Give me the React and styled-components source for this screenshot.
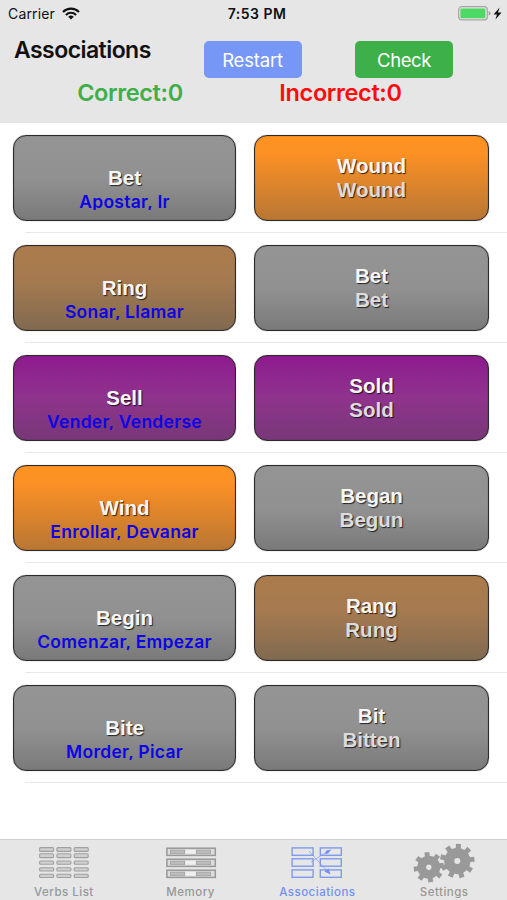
import React, { useState } from "react";
import styled, { createGlobalStyle } from "styled-components";

const GlobalStyle = createGlobalStyle`
  * {
    box-sizing: border-box;
  }
  body {
    margin: 0;
    background: #fff;
    font-family: Inter, "Liberation Sans", sans-serif;
  }
`;

const Screen = styled.div`
  display: flex;
  flex-direction: column;
  width: 507px;
  height: 900px;
  overflow: hidden;
  background: #fff;
`;

const Header = styled.header`
  height: 123px;
  flex: none;
  background: #e6e6e6;
`;

const StatusBar = styled.div`
  display: grid;
  grid-template-columns: 1fr auto 1fr;
  align-items: center;
  height: 27px;
  padding: 0 5px 0 8px;
  font-size: 14px;
  color: #111;
`;

const Carrier = styled.div`
  display: flex;
  align-items: center;
  gap: 7px;
  letter-spacing: 0.15px;
`;

const Time = styled.div`
  font-weight: 600;
  letter-spacing: 0.5px;
  padding-left: 4px;
`;

const Battery = styled.div`
  display: flex;
  justify-content: flex-end;
`;

const TitleRow = styled.div`
  display: flex;
  height: 51px;
  padding: 14px 54px 0 14px;
`;

const Title = styled.h1`
  width: 189.5px;
  margin: -6px 0 0;
  font-size: 23px;
  line-height: 30px;
  font-weight: 600;
  letter-spacing: -0.55px;
  color: #111;
`;

const Button = styled.button`
  width: 98px;
  height: 37px;
  padding: 0;
  border: 0;
  border-radius: 5px;
  font-family: inherit;
  font-size: 18.5px;
  letter-spacing: ${({ spacing }) => spacing};
  color: #fff;
  background: ${({ color }) => color};
  & + & {
    margin-left: 53.5px;
  }
`;

const ScoreRow = styled.div`
  display: grid;
  grid-template-columns: 260px 161px;
  line-height: 30px;
  text-align: center;
`;

const Score = styled.div`
  font-size: 23.5px;
  font-weight: 600;
  white-space: nowrap;
  letter-spacing: -0.35px;
  color: ${({ color }) => color};
`;

const List = styled.main`
  flex: 1;
`;

const Row = styled.div`
  display: grid;
  grid-template-columns: 223px 235px;
  column-gap: 18px;
  height: 110px;
  padding: 12px 0 0 13px;
  background: linear-gradient(#e8e8ea, #e8e8ea) 25px 100% / 100% 1px no-repeat;
`;

const fills = {
  gray: "#949494 0%, #919191 50%, #7a7a7a 100%",
  orange: "#ff9322 0%, #fb9025 22%, #b87634 100%",
  brown: "#ab7b4b 0%, #a67a50 40%, #816a50 100%",
  purple: "#8e1b8f 0%, #8f338d 50%, #773877 100%",
};

const Card = styled.div`
  display: flex;
  flex-direction: column;
  align-items: center;
  height: 86px;
  padding-top: ${({ verb }) => (verb ? "30px" : "18px")};
  border: 1px solid #2e2a2b;
  border-radius: 13px;
  box-shadow: 0 0 1px rgba(0, 0, 0, 0.5), inset 0 0 1px rgba(0, 0, 0, 0.6);
  background: linear-gradient(${({ fill }) => fills[fill]});
`;

const Word = styled.div`
  font-family: "Liberation Sans", Arial, sans-serif;
  font-size: 20.5px;
  line-height: 24px;
  font-weight: 700;
  color: ${({ dim }) => (dim ? "#dcdcdc" : "#f6f6f6")};
  text-shadow: 1px 1px 1px rgba(0, 0, 0, 0.75);
`;

const Translation = styled.div`
  height: 20px;
  overflow: hidden;
  font-size: 17.5px;
  line-height: 24px;
  font-weight: 600;
  letter-spacing: 0.27px;
  white-space: nowrap;
  color: #0d03e6;
`;

const TabBar = styled.nav`
  display: grid;
  grid-template-columns: repeat(4, 1fr);
  height: 61px;
  flex: none;
  background: #e6e6e6;
  border-top: 1px solid #cfcfcf;
`;

const Tab = styled.div`
  display: flex;
  flex-direction: column;
  align-items: center;
  padding: 3px 0 0 1px;
  font-size: 11.5px;
  line-height: 14px;
  font-weight: 500;
  letter-spacing: 0.5px;
  cursor: pointer;
  color: ${({ active }) => (active ? "#7390f2" : "#979797")};
  svg {
    display: block;
    margin-bottom: 2px;
  }
`;

const rows = [
  { verb: "Bet", es: "Apostar, Ir", left: "gray", past: "Wound", part: "Wound", right: "orange" },
  { verb: "Ring", es: "Sonar, Llamar", left: "brown", past: "Bet", part: "Bet", right: "gray" },
  { verb: "Sell", es: "Vender, Venderse", left: "purple", past: "Sold", part: "Sold", right: "purple" },
  { verb: "Wind", es: "Enrollar, Devanar", left: "orange", past: "Began", part: "Begun", right: "gray" },
  { verb: "Begin", es: "Comenzar, Empezar", left: "gray", past: "Rang", part: "Rung", right: "brown" },
  { verb: "Bite", es: "Morder, Picar", left: "gray", past: "Bit", part: "Bitten", right: "gray" },
];

const WifiIcon = () => (
  <svg width="18" height="13" viewBox="0 0 18 13" fill="none" stroke="#111" strokeWidth="2.1">
    <path d="M1 4.9a11.4 11.4 0 0 1 16 0" />
    <path d="M3.9 7.9a7.3 7.3 0 0 1 10.2 0" />
    <path d="M9 12.6 6.2 9.8a4 4 0 0 1 5.6 0Z" fill="#111" stroke="none" />
  </svg>
);

const BatteryIcon = () => (
  <svg width="44" height="15" viewBox="0 0 44 15">
    <rect x="0.7" y="0.7" width="28.6" height="13.2" rx="3" fill="none" stroke="#a5a5a5" strokeWidth="1.2" />
    <rect x="2.4" y="2.4" width="25" height="9.8" rx="1.2" fill="#4cd964" />
    <path d="M30.6 5q2 .6 2 2.3t-2 2.3Z" fill="#a5a5a5" />
    <path d="M41.6 1.4 35.6 8.4h3.4L37.4 13.4l6.2-7h-3.6Z" fill="#111" />
  </svg>
);

const VerbsIcon = () => (
  <svg width="52" height="40" viewBox="0 0 52 40" fill="#cfcfcf" stroke="#a0a0a0" strokeWidth="1.1">
    {[4.6, 10.8, 18, 24.8, 31.3].map((y) =>
      [1.6, 18.9, 36.2].map((x) => (
        <rect key={`${x}-${y}`} x={x} y={y} width="14" height={y < 15 ? 3.8 : 3.2} rx="1" />
      ))
    )}
  </svg>
);

const MemoryIcon = () => (
  <svg width="52" height="40" viewBox="0 0 52 40" stroke="#999">
    {[5.2, 16.2, 27.2].map((y) => (
      <g key={y}>
        <rect x="1.9" y={y} width="48.4" height="7.2" fill="#dcdcdc" strokeWidth="1.5" />
        <rect x="5.5" y={y + 2} width="14" height="3.2" fill="#bdbdbd" stroke="#a8a8a8" strokeWidth="1" />
        <rect x="31.5" y={y + 2} width="14" height="3.2" fill="#bdbdbd" stroke="#a8a8a8" strokeWidth="1" />
        <rect x="20.5" y={y + 1.8} width="10" height="3.6" fill="#f0f0f0" stroke="none" />
      </g>
    ))}
  </svg>
);

const AssociationsIcon = () => (
  <svg width="52" height="40" viewBox="0 0 52 40" fill="none" stroke="#809af0" strokeWidth="1.4">
    {[4.9, 15.8, 26.9].map((y) => (
      <g key={y}>
        <rect x="1.1" y={y} width="21" height="7.4" />
        <rect x="29.3" y={y} width="21" height="7.4" />
      </g>
    ))}
    <path d="M18 8 37 29M20 19 38 7.5" strokeWidth="0.7" />
    <path d="m33.8 11 1.6-3.4 4.8-1-3.2 3.8ZM33.4 28.4l4-3.2 2.2 6.4Z" fill="#7390f2" stroke="none" />
  </svg>
);

// toothed outline followed by the axle hole, filled with evenodd
const gearPath = (cx, cy, outer, inner, hole, teeth, start) => {
  const step = (Math.PI * 2) / teeth;
  const points = [];
  for (let i = 0; i < teeth; i++) {
    const a = start + i * step;
    [
      [inner, -0.27],
      [outer, -0.21],
      [outer, 0.21],
      [inner, 0.27],
    ].forEach(([r, t]) => {
      const x = cx + r * Math.cos(a + t * step);
      const y = cy + r * Math.sin(a + t * step);
      points.push(`${x.toFixed(2)} ${y.toFixed(2)}`);
    });
  }
  return `M${points.join("L")}ZM${cx - hole} ${cy}a${hole} ${hole} 0 1 0 ${hole * 2} 0a${hole} ${hole} 0 1 0 ${-hole * 2} 0Z`;
};

const SettingsIcon = () => (
  <svg width="64" height="40" viewBox="0 0 64 40" fill="#999" fillRule="evenodd">
    <path d={gearPath(16.8, 24.2, 15.3, 11.6, 2.7, 8, -1.7)} />
    <path d={gearPath(45.3, 18, 17.4, 13.2, 3, 9, -1.5)} />
  </svg>
);

const tabs = [
  { label: "Verbs List", Icon: VerbsIcon },
  { label: "Memory", Icon: MemoryIcon },
  { label: "Associations", Icon: AssociationsIcon },
  { label: "Settings", Icon: SettingsIcon },
];

const App = () => {
  const [tab, setTab] = useState("Associations");
  return (
    <>
      <GlobalStyle />
      <Screen>
        <Header>
          <StatusBar>
            <Carrier>
              Carrier
              <WifiIcon />
            </Carrier>
            <Time>7:53 PM</Time>
            <Battery>
              <BatteryIcon />
            </Battery>
          </StatusBar>
          <TitleRow>
            <Title>Associations</Title>
            <Button color="#7697f5" spacing="-0.2px">Restart</Button>
            <Button color="#3eb049" spacing="-0.4px">Check</Button>
          </TitleRow>
          <ScoreRow>
            <Score color="#41ae49">Correct:0</Score>
            <Score color="#fb0d0d">Incorrect:0</Score>
          </ScoreRow>
        </Header>
        <List>
          {rows.map((row) => (
            <Row key={row.verb}>
              <Card fill={row.left} verb>
                <Word>{row.verb}</Word>
                <Translation>{row.es}</Translation>
              </Card>
              <Card fill={row.right}>
                <Word>{row.past}</Word>
                <Word dim>{row.part}</Word>
              </Card>
            </Row>
          ))}
        </List>
        <TabBar>
          {tabs.map(({ label, Icon }) => (
            <Tab key={label} active={label === tab} onClick={() => setTab(label)}>
              <Icon />
              {label}
            </Tab>
          ))}
        </TabBar>
      </Screen>
    </>
  );
};

export default App;
